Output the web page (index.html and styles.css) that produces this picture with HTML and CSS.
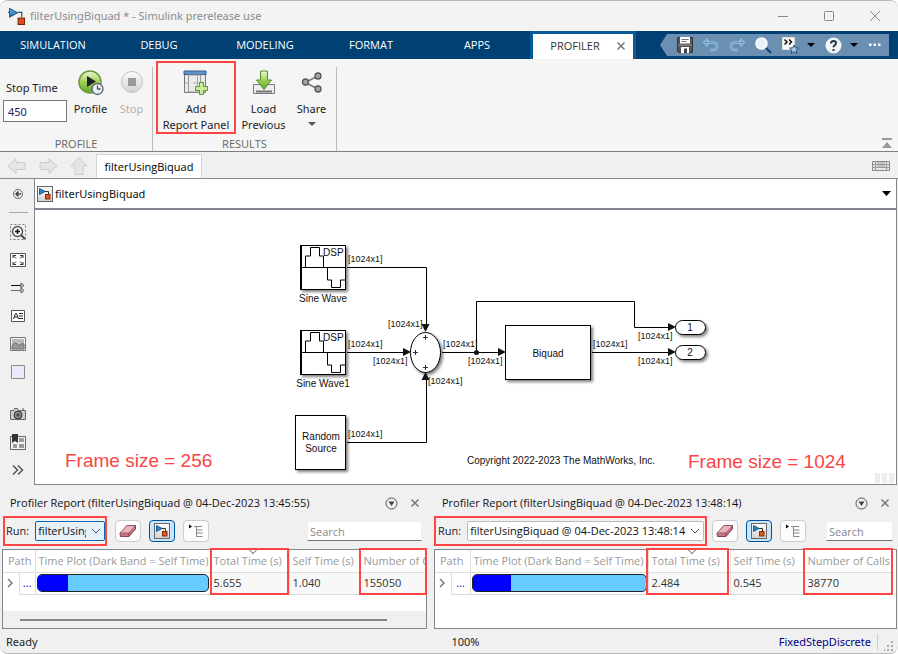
FILE: index.html
```html
<!DOCTYPE html>
<html lang="en">
<head>
<meta charset="utf-8">
<title>filterUsingBiquad * - Simulink prerelease use</title>
<link rel="stylesheet" href="styles.css">
</head>
<body>
<svg class="defs" aria-hidden="true">
  <defs>
    <linearGradient id="green" x1="0" y1="0" x2="0" y2="1"><stop offset="0" stop-color="#eef8d8"/><stop offset=".5" stop-color="#9fd058"/><stop offset="1" stop-color="#5fa52c"/></linearGradient>
    <linearGradient id="grey" x1="0" y1="0" x2="0" y2="1"><stop offset="0" stop-color="#fdfdfd"/><stop offset="1" stop-color="#d2d2d2"/></linearGradient>
    <linearGradient id="tri" x1="0" y1="0" x2="0" y2="1"><stop offset="0" stop-color="#6db8ea"/><stop offset="1" stop-color="#1f6cab"/></linearGradient>
    <symbol id="model" viewBox="0 0 16 16"><path d="M0 4h2M9 4h4v5" fill="none" stroke="#333"/><path d="M1.500.5v8L9 4.500z" fill="url(#tri)" stroke="#1d5d94"/><rect x="9.500" y="9.500" width="6" height="6" fill="#d9521e" stroke="#7c2608"/></symbol>
    <symbol id="modelbox" viewBox="0 0 16 16"><rect x=".5" y=".5" width="15" height="15" fill="url(#grey)" stroke="#666"/><path d="M2 5h1M8 5.500h3.500V9" fill="none" stroke="#333"/><path d="M2.500 2.500v6L8 5.500z" fill="#2f83c5" stroke="#1d5d94"/><rect x="8.500" y="8.500" width="4.500" height="4.500" fill="#e05520" stroke="#8b2d0b"/></symbol>
    <symbol id="eraser" viewBox="0 0 18 14"><path d="M1 9.500 8 1.500h8.500V5L10 12.500H1.500z" fill="#c97585" stroke="#8b4452"/><path d="M1 9 8 1.500h8.500L10 9z" fill="#e8b3bc" stroke="#8b4452" stroke-width=".7"/><path d="M10 9v3.500" stroke="#8b4452"/></symbol>
    <symbol id="outline" viewBox="0 0 16 14"><path d="M1 .5v4L4 2.500z" fill="#000"/><path d="M6 2.500h8M8.500 2.500v10M8.500 6h6M8.500 9h6M8.500 12.500h6" fill="none" stroke="#888"/></symbol>
    <symbol id="menu" viewBox="0 0 13 13"><circle cx="6.500" cy="6.500" r="5.500" fill="none" stroke="#555"/><path d="M3.500 4.500h6L6.500 9z" fill="#444"/></symbol>
    <symbol id="close" viewBox="0 0 10 10"><path d="m1.500 1.500 7 7m0-7-7 7" stroke="#777" stroke-width="1.500"/></symbol>
    <symbol id="chev" viewBox="0 0 10 6"><path d="m1 1 4 4 4-4" fill="none" stroke="#555"/></symbol>
  </defs>
</svg>
<div class="window">
  <header class="titlebar">
    <svg width="17" height="17"><use href="#model"/></svg>
    <h1>filterUsingBiquad * - Simulink prerelease use</h1>
    <div class="wincontrols">
      <button aria-label="Minimize"><svg width="12" height="12"><path d="M1 6.500h10" stroke="#888"/></svg></button>
      <button aria-label="Maximize"><svg width="12" height="12"><rect x="1.500" y="1.500" width="9" height="9" rx="1" fill="none" stroke="#888"/></svg></button>
      <button aria-label="Close"><svg width="12" height="12"><path d="m1 1 10 10M11 1 1 11" stroke="#888"/></svg></button>
    </div>
  </header>

  <nav class="tabs">
    <button>SIMULATION</button><button>DEBUG</button><button>MODELING</button><button>FORMAT</button><button>APPS</button>
    <div class="activetab"><button>PROFILER</button><button class="tabclose" aria-label="Close tab"><svg width="10" height="10"><use href="#close"/></svg></button></div>
    <div class="quick">
      <button aria-label="Save"><svg width="16" height="16" viewBox="0 0 16 16"><path d="M.5.5h15v15H1.500l-1-1z" fill="#555" stroke="#333"/><path d="M3 0h10v6.500H3z" fill="#fff"/><path d="M4.500 2.500h7M4.500 4.500h5" stroke="#777"/><path d="M1 8h14" stroke="#999"/><path d="M4 10h8v6H4z" fill="#fff"/><path d="M7 11.500h3V16H7z" fill="#444"/></svg></button>
      <button aria-label="Undo"><svg width="16" height="14" viewBox="0 0 16 14"><path d="M5 1 1.500 4.500 5 8M2 4.500h8q4 0 4 3.500t-4 4H7" fill="none" stroke="#9cc6e2" stroke-width="2.500"/><path d="M5 1 1.500 4.500 5 8M2 4.500h8q4 0 4 3.500t-4 4H7" fill="none" stroke="#6597bb"/></svg></button>
      <button aria-label="Redo"><svg width="16" height="14" viewBox="0 0 16 14"><path d="m11 1 3.500 3.500L11 8M14 4.500H6q-4 0-4 3.500t4 4h3" fill="none" stroke="#9cc6e2" stroke-width="2.500"/><path d="m11 1 3.500 3.500L11 8M14 4.500H6q-4 0-4 3.500t4 4h3" fill="none" stroke="#6597bb"/></svg></button>
      <button aria-label="Find"><svg width="17" height="17" viewBox="0 0 17 17"><path d="m10 10 6 6" stroke="#0c4472" stroke-width="2"/><circle cx="6.500" cy="6.500" r="5.500" fill="#e6f3fa" stroke="#fff" stroke-width="1.500"/></svg></button>
      <button class="split" aria-label="Favorites"><svg width="17" height="17" viewBox="0 0 17 17"><path d="M.5.5h12v12H.5z" fill="#fafafa" stroke="#ddd"/><path d="m2.500 2.500 2.500 2.500L2.500 7.500M7 2.500 9.500 5 7 7.500" fill="none" stroke="#111" stroke-width="1.500"/><path d="m12 8 1.300 2.800 3.200.3-2.400 2.100.7 3.300-2.800-1.700-2.800 1.700.7-3.300-2.400-2.100 3.200-.3z" fill="#a5cce8" stroke="#28557b"/></svg><svg width="8" height="5"><path d="M0 0h8L4 4z"/></svg></button>
      <button class="split" aria-label="Help"><svg width="17" height="17" viewBox="0 0 17 17"><circle cx="8.500" cy="8.500" r="7.500" fill="#f0f4f7" stroke="#fff"/><path d="M6 6.500q0-2.500 2.500-2.500T11 6.200q0 1.300-1.500 2.100-1 .6-1 2M8.500 12v2" fill="none" stroke="#263746" stroke-width="2"/></svg><svg width="8" height="5"><path d="M0 0h8L4 4z"/></svg></button>
      <button aria-label="More"><svg width="14" height="4"><path d="M1 .5h2.500V3H1zM5.500.5H8V3H5.500zM10 .5h2.500V3H10z" fill="#fff"/></svg></button>
    </div>
  </nav>

  <section class="ribbon">
    <div class="group">
      <div class="items">
        <div class="stoptime"><label for="stop">Stop Time</label><input id="stop" value="450"></div>
        <button class="tool"><svg width="26" height="26" viewBox="0 0 26 26"><circle cx="12" cy="12" r="11" fill="url(#green)" stroke="#69993b" stroke-width="1.500"/><path d="M9 6v11l9-5.500z" fill="#222"/><circle cx="19.500" cy="19" r="5.500" fill="#e9eef3" stroke="#59636d" stroke-width="1.300"/><path d="M19.500 15.500V19h3" fill="none" stroke="#46586a" stroke-width="1.300"/></svg>Profile</button>
        <button class="tool off"><svg width="26" height="26" viewBox="0 0 26 26"><circle cx="13" cy="12" r="10.500" fill="url(#grey)" stroke="#c3c3c3"/><path d="M9 8h8v8H9z" fill="#9a9a9a"/></svg>Stop</button>
      </div>
      <h2>PROFILE</h2>
    </div>
    <div class="group results">
      <div class="items">
        <button class="tool wide marked"><svg width="26" height="26" viewBox="0 0 26 26"><path d="M1.500 1.500h21v21h-21z" fill="#eaeaea" stroke="#777"/><path d="M1 1h22v3.500H1z" fill="#5e94cf" stroke="#375f91"/><path d="M5.500 5v17M10 13h8M2 13h3M14.500 5v14" stroke="#aaa" fill="none"/><path d="M5.500 5h12v17h-12z" fill="none" stroke="#999"/><path d="M16.500 12.500h4v4h4v4h-4v4h-4v-4h-4v-4h4z" fill="#cdea9a" stroke="#5d9634"/></svg>Add<br>Report Panel</button>
        <button class="tool"><svg width="26" height="26" viewBox="0 0 26 26"><path d="M2.500 14.500h21v9h-21z" fill="#eee" stroke="#777"/><path d="M5 21.500h16" stroke="#777" stroke-width="2"/><path d="M9.500 1h7v9h4L13 19.500 5.500 10h4z" fill="url(#green)" stroke="#568c2c"/></svg>Load<br>Previous</button>
        <button class="tool"><svg width="26" height="26" viewBox="0 0 26 26"><path d="M19 6 6 12.500 19 19" fill="none" stroke="#777" stroke-width="1.500"/><g fill="#a3a3a3" stroke="#555" stroke-width="1.300"><circle cx="19" cy="6" r="3"/><circle cx="6.500" cy="12" r="3"/><circle cx="19" cy="19" r="3"/></g></svg>Share<svg class="caret" width="8" height="4"><path d="M0 0h8L4 4z" fill="#555"/></svg></button>
      </div>
      <h2>RESULTS</h2>
    </div>
    <button class="collapse" aria-label="Collapse"><svg width="12" height="11"><path d="M1 0h10v2H1zM6 4l5 6H1z" fill="#999"/></svg></button>
  </section>

  <div class="docbar">
    <button aria-label="Back"><svg width="20" height="18"><path d="M1 9 9 1.500v4h9v7H9v4z" fill="#e5e5e5" stroke="#ccc"/></svg></button>
    <button aria-label="Forward"><svg width="20" height="18"><path d="m19 9-8-7.500v4H2v7h9v4z" fill="#e5e5e5" stroke="#ccc"/></svg></button>
    <button aria-label="Up"><svg width="20" height="18"><path d="m10 .5 8 8.500h-4v8.500H6V9H2z" fill="#e5e5e5" stroke="#ccc"/></svg></button>
    <button class="doctab">filterUsingBiquad</button>
    <button class="keyboard" aria-label="Keyboard"><svg width="18" height="10"><path d="M.5.5h17v9H.5z" fill="#e8e8e8" stroke="#888"/><path d="M0 3.500h18M0 6.500h18M3.500 0v10M6 1v6M8 1v6M10 1v6M12 1v6M14.500 0v10" fill="none" stroke="#999"/></svg></button>
  </div>

  <main class="editor">
    <aside class="palette">
      <button aria-label="Hide browser"><svg width="16" height="16"><circle cx="8" cy="8" r="4.500" fill="none" stroke="#666"/><path d="M8.500 5.500 6 8l2.500 2.500M6 8h5" fill="none" stroke="#444" stroke-width="1.500"/></svg></button>
      <hr>
      <button aria-label="Zoom"><svg width="16" height="16"><path d="M.5.5h15v15H.5z" fill="none" stroke="#777" stroke-dasharray="2 2"/><path d="m11 11 4 4" stroke="#444" stroke-width="2"/><circle cx="7.500" cy="7.500" r="5" fill="#f5f5f5" stroke="#555" stroke-width="1.500"/><path d="M5 7.500h5M7.500 5v5" stroke="#111" stroke-width="1.500"/></svg></button>
      <button aria-label="Fit to view"><svg width="16" height="16"><path d="M.5 1.500h15v13H.5z" fill="#fff" stroke="#555"/><path d="M3 6V3.500h3M10 3.500h3V6M3 10v2.500h3M13 10v2.500h-3M3 3.500l3 3M13 3.500l-3 3M3 12.500l3-3M13 12.500l-3-3" fill="none" stroke="#333"/></svg></button>
      <button aria-label="Signals"><svg width="16" height="16"><path d="M1 5.500h12" stroke="#111"/><path d="M1 10.500h12" stroke="#666"/><path d="m11 3 3 2.500L11 8zM11 8l3 2.500-3 2.500z" fill="#eee" stroke="#555"/></svg></button>
      <button aria-label="Annotation"><svg width="16" height="16"><path d="M1.500 2.500h13v11h-13z" fill="#fff" stroke="#555"/><path d="m3.500 11 2-5.500h1l2 5.500M4.500 9h3M9 5.500h4M9 8h4M9 10.500h4" fill="none" stroke="#222"/></svg></button>
      <button aria-label="Image"><svg width="16" height="16"><path d="M.5 1.500h15v13H.5z" fill="#f4f4f4" stroke="#777"/><path d="M2 3h12v10H2z" fill="#bbb"/><path d="M2 10q3-5 5-2t3 1 4-1v5H2z" fill="#999" stroke="#666"/></svg></button>
      <button aria-label="Area"><svg width="16" height="16"><path d="M1.500 1.500h13v13h-13z" fill="#e9e9fb" stroke="#888"/></svg></button>
      <button class="apart" aria-label="Screenshot"><svg width="16" height="16"><path d="M.5 4.500h3l1-2h3l1 2h7v9H.5z" fill="#ccc" stroke="#666"/><circle cx="8" cy="9" r="4" fill="#888" stroke="#333"/><circle cx="8" cy="9" r="1.500" fill="#444"/><path d="M12 3h2" stroke="#555"/></svg></button>
      <button aria-label="Bookmarks"><svg width="16" height="16"><path d="M.5 2.500h15v13H.5z" fill="#f4f4f4" stroke="#666"/><path d="M9 4h5v4H9zM9 10h5v4H9zM3 10h4v4H3z" fill="#999"/><path d="M2 0h6v9L5 7 2 9z" fill="#333"/></svg></button>
      <button aria-label="More tools"><svg width="16" height="16"><path d="m3 3.500 4.500 4.500L3 12.500M8 3.500l4.500 4.500L8 12.500" fill="none" stroke="#555" stroke-width="1.500"/></svg></button>
    </aside>
    <div class="stage">
      <div class="crumb"><svg width="16" height="16"><use href="#modelbox"/></svg><span>filterUsingBiquad</span><button aria-label="History"><svg width="9" height="5"><path d="M0 0h9L4.500 5z"/></svg></button></div>
      <div class="canvas">
        <svg class="diagram" viewBox="35 210 861 274" role="img" aria-label="Block diagram">
          <defs>
            <filter id="sh" x="-20%" y="-20%" width="150%" height="150%"><feDropShadow dx="2" dy="2" stdDeviation="1.500" flood-opacity=".5"/></filter>
            <g id="sine"><rect x=".5" y=".5" width="45" height="44" fill="#fff" stroke="#000" filter="url(#sh)"/><path d="M1.500 0v45M0 22.500h46M5.500 22V11h5V2.500h9V11h4v11.500M27.500 22.500V35h4v7.500h9V35h5" fill="none" stroke="#000"/><text x="23" y="11">DSP</text></g>
            <path id="ar" d="M0-4v8L8 0z"/>
          </defs>
          <use href="#sine" x="300" y="245"/><use href="#sine" x="300" y="330"/>
          <g filter="url(#sh)" fill="#fff" stroke="#000"><rect x="295.500" y="415.500" width="50" height="54"/><rect x="505.500" y="325.500" width="85" height="54"/><ellipse cx="425.500" cy="352.500" rx="15" ry="20"/><rect x="675.500" y="320.500" width="30" height="14" rx="7"/><rect x="675.500" y="345.500" width="30" height="14" rx="7"/></g>
          <path d="M347 267.500h79.500V326M347 352.500h58M347 442.500h79.500V379M442 352.500h57M476.500 352.500v-51h158v26H670M592 352.500h78" fill="none" stroke="#000"/>
          <circle cx="476.500" cy="352.500" r="2.500"/>
          <use href="#ar" x="403" y="352"/><use href="#ar" x="498" y="352"/><use href="#ar" x="668" y="327"/><use href="#ar" x="668" y="352"/>
          <path d="M421.500 324h8l-4 8zM421.500 380h8l-4-8z"/>
          <g class="dims"><text x="348" y="262">[1024x1]</text><text x="348" y="347">[1024x1]</text><text x="348" y="437">[1024x1]</text><text x="388" y="327">[1024x1]</text><text x="373" y="364">[1024x1]</text><text x="428" y="384">[1024x1]</text><text x="443" y="347">[1024x1]</text><text x="468" y="364">[1024x1]</text><text x="593" y="347">[1024x1]</text><text x="638" y="339">[1024x1]</text><text x="638" y="364">[1024x1]</text></g>
          <path d="M423 337.500h5M425.500 335v5M413 352.500h5M415.500 350v5M423 367.500h5M425.500 365v5" stroke="#333"/>
          <g class="mid"><text x="323" y="302">Sine Wave</text><text x="323" y="387">Sine Wave1</text><text x="321" y="440">Random</text><text x="321" y="452">Source</text><text x="548" y="357">Biquad</text><text x="690" y="331">1</text><text x="690" y="356">2</text><text x="561" y="464">Copyright 2022-2023 The MathWorks, Inc.</text></g>
          <g class="note"><text x="65" y="467">Frame size = 256</text><text x="688" y="468">Frame size = 1024</text></g>
          <path d="M875 473h5v10h-5zM882 473h5v10h-5zM889 473h5v10h-5z" fill="#eee"/>
        </svg>
      </div>
    </div>
  </main>

  <section class="docks">
    <article class="dock">
      <header><h3>Profiler Report (filterUsingBiquad @ 04-Dec-2023 13:45:55)</h3><button aria-label="Panel menu"><svg width="13" height="13"><use href="#menu"/></svg></button><button aria-label="Close panel"><svg width="10" height="10"><use href="#close"/></svg></button></header>
      <div class="bar">
        <div class="run"><label for="run1">Run:</label><span class="pick focus"><select id="run1"><option>filterUsingBiquad @ 04-Dec-2023 13:45:55</option></select><svg width="10" height="6"><use href="#chev"/></svg></span></div>
        <button class="sq" aria-label="Clear"><svg width="18" height="14"><use href="#eraser"/></svg></button>
        <button class="sq on" aria-label="Highlight"><svg width="16" height="16"><use href="#modelbox"/></svg></button>
        <button class="sq" aria-label="Expand"><svg width="16" height="14"><use href="#outline"/></svg></button>
        <input class="search" type="search" placeholder="Search" aria-label="Search">
      </div>
      <div class="report">
        <div class="scroller">
          <table>
            <colgroup><col class="c-exp"><col class="c-dots"><col class="c-plot"><col class="c-total"><col class="c-self"><col class="c-calls"></colgroup>
            <thead><tr><th colspan="2">Path</th><th>Time Plot (Dark Band = Self Time)</th><th class="sorted">Total Time (s)</th><th>Self Time (s)</th><th class="clip">Number of Calls</th></tr></thead>
            <tbody><tr><td class="exp"><svg width="6" height="10"><path d="m1 1 4 4-4 4" fill="none" stroke="#777" stroke-width="1.500"/></svg></td><td class="dots"><a href="#">...</a></td><td class="plot"><div class="band"><i style="width:18%"></i></div></td><td class="num">5.655</td><td class="num">1.040</td><td class="num">155050</td></tr></tbody>
          </table>
          <div class="track"><div></div></div>
        </div>
        <span class="mark m1"></span><span class="mark m2"></span>
      </div>
    </article>
    <article class="dock second">
      <header><h3>Profiler Report (filterUsingBiquad @ 04-Dec-2023 13:48:14)</h3><button aria-label="Panel menu"><svg width="13" height="13"><use href="#menu"/></svg></button><button aria-label="Close panel"><svg width="10" height="10"><use href="#close"/></svg></button></header>
      <div class="bar">
        <div class="run"><label for="run2">Run:</label><span class="pick"><select id="run2"><option>filterUsingBiquad @ 04-Dec-2023 13:48:14</option></select><svg width="10" height="6"><use href="#chev"/></svg></span></div>
        <button class="sq" aria-label="Clear"><svg width="18" height="14"><use href="#eraser"/></svg></button>
        <button class="sq on" aria-label="Highlight"><svg width="16" height="16"><use href="#modelbox"/></svg></button>
        <button class="sq" aria-label="Expand"><svg width="16" height="14"><use href="#outline"/></svg></button>
        <input class="search" type="search" placeholder="Search" aria-label="Search">
      </div>
      <div class="report">
        <div class="scroller">
          <table>
            <colgroup><col class="c-exp"><col class="c-dots"><col class="c-plot"><col class="c-total"><col class="c-self"><col class="c-calls"></colgroup>
            <thead><tr><th colspan="2">Path</th><th>Time Plot (Dark Band = Self Time)</th><th class="sorted">Total Time (s)</th><th>Self Time (s)</th><th>Number of Calls</th></tr></thead>
            <tbody><tr><td class="exp"><svg width="6" height="10"><path d="m1 1 4 4-4 4" fill="none" stroke="#777" stroke-width="1.500"/></svg></td><td class="dots"><a href="#">...</a></td><td class="plot"><div class="band"><i style="width:22%"></i></div></td><td class="num">2.484</td><td class="num">0.545</td><td class="num">38770</td></tr></tbody>
          </table>
        </div>
        <span class="mark m1"></span><span class="mark m2"></span>
      </div>
    </article>
  </section>

  <footer class="status"><span>Ready</span><span>100%</span><span class="solver"><a href="#">FixedStepDiscrete</a><svg width="10" height="10"><path d="M7 0h2v2H7zM7 4h2v2H7zM3 4h2v2H3zM7 8h2v2H7zM3 8h2v2H3zM0 8h1v2H0z" fill="#aaa"/></svg></span></footer>
</div>
</body>
</html>
```
FILE: styles.css
```css
* { box-sizing: border-box; }
body { margin: 0; background: #fff; font: 11px/16px "Noto Sans", "Open Sans", sans-serif; color: #1c1c1c; }
button { border: 0; padding: 0; background: none; font: inherit; color: inherit; display: flex; align-items: center; justify-content: center; }
h1, h2, h3 { margin: 0; font: inherit; }
svg { display: block; flex: none; }
input, select { font: inherit; color: inherit; min-width: 0; }
a { text-decoration: none; color: #0000e0; }
.defs { position: absolute; width: 0; height: 0; }
.window { min-height: 100vh; display: flex; flex-direction: column; background: #f0f0f0; border-top: 1px solid #bbb; border-bottom: 1px solid #bbb; border-radius: 8px; overflow: hidden; }

.titlebar { height: 30px; flex: none; display: flex; align-items: center; gap: 5px; padding-left: 8px; background: #f3f3f3; color: #8c8c8c; }
.titlebar h1 { flex: 1; }
.wincontrols { display: flex; }
.wincontrols button { width: 46px; height: 30px; }

.tabs { height: 28px; flex: none; display: flex; background: #004073; color: #fff; padding-right: 9px; font-family: "Open Sans", "Noto Sans", sans-serif; }
.tabs > button { width: 106px; }
.activetab { width: 106px; display: flex; padding-bottom: 2px; background: #fff; color: #333; border: 3px solid #075b99; border-bottom: 0; }
.activetab button:first-child { flex: 1; padding-left: 8px; }
.tabclose { width: 24px; }
.quick { width: 229px; height: 22px; margin: 3px 0 0 auto; padding: 0 7px 0 17px; display: flex; align-items: center; justify-content: space-between; background: #6a8fb0; clip-path: polygon(0 50%, 7px 0, 100% 0, 100% 100%, 7px 100%); }
.quick .split { gap: 8px; }

.ribbon { flex: none; height: 93px; display: flex; background: #f5f5f5; border-bottom: 1px solid #808080; padding-top: 2px; }
.group { width: 153px; display: flex; flex-direction: column; position: relative; border-right: 1px solid transparent; }
.group::after { content: ""; position: absolute; right: -1px; top: 6px; bottom: 0; width: 1px; background: #bbb; }
.group.results { width: 184px; }
.group h2 { text-align: center; font-family: "Open Sans", "Noto Sans", sans-serif; line-height: 14px; color: #666; }
.items { flex: 1; display: flex; }
.stoptime { width: 70px; padding: 19px 0 0 3px; }
.stoptime label { display: block; padding-left: 3px; }
.stoptime input { display: block; width: 64px; height: 22px; margin-top: 4px; padding: 0 4px; border: 1px solid #777; background: #fff; color: #2a1a5e; }
.tool { position: relative; min-width: 41px; flex-direction: column; justify-content: flex-start; padding-top: 9px; }
.results .items { justify-content: space-between; padding: 0 4px 0 3px; }
.tool svg { margin-bottom: 5px; }
.tool .caret { margin: 5px 0 0; }
.wide { width: 80px; }
.off { color: #b0b0b0; }
.marked::after { content: ""; position: absolute; inset: 0 0 3px; border: 2px solid #f44; }
.collapse { margin: auto 5px 2px auto; }

.docbar { flex: none; height: 27px; display: flex; align-items: center; gap: 11px; padding: 2px 8px 0 7px; border-bottom: 1px solid #8a8c93; }
.doctab { align-self: stretch; margin-left: -4px; width: 106px; background: #fff; border: 1px solid #d5d5d5; border-bottom: 0; color: #000; font-family: "Open Sans", "Noto Sans", sans-serif; }
.keyboard { margin-left: auto; }

.editor { flex: 1; display: flex; padding-right: 1px; }
.palette { width: 34px; padding: 1px 1px 0 3px; display: flex; flex-direction: column; align-items: center; }
.palette button { width: 28px; height: 28px; }
.palette hr { width: 19px; margin: 4px 0 5px; border: 0; border-top: 1px solid #aaa; }
.palette .apart { margin-top: 14px; }
.stage { flex: 1; display: flex; flex-direction: column; border: 1px solid #808590; border-top: 0; }
.crumb { height: 31px; display: flex; align-items: center; gap: 2px; padding: 0 5px 0 2px; background: #fff; border-bottom: 2px solid #808590; color: #111; }
.crumb button { margin-left: auto; }
.canvas { flex: 1; background: #fff; }
.diagram { width: 100%; height: auto; font: 10px "Liberation Sans", sans-serif; fill: #111; }
.dims { font-size: 9px; }
.mid { text-anchor: middle; }
.note { font-size: 19px; fill: #f94545; }

.docks { flex: none; display: grid; grid-template-columns: 427fr 465fr; gap: 6px; font-family: "Open Sans", "Noto Sans", sans-serif; }
.dock { min-width: 0; display: flex; flex-direction: column; padding-left: 2px; }
.dock.second { padding: 0 1px 0 1px; }
.dock header { height: 32px; padding: 4px 7px 0 8px; display: flex; align-items: center; gap: 12px; color: #111; }
.dock h3 { flex: 1; white-space: nowrap; }
.bar { height: 32px; display: flex; align-items: center; gap: 8px; padding: 0 5px 4px 1px; }
.second .bar { padding: 0 4px 4px 0; }
.run { display: flex; align-items: center; height: 30px; flex: none; width: 104px; gap: 6px; border: 2px solid #f44; padding: 0 0 0 1px; }
.second .run { width: 273px; padding: 0 1px 0 2px; margin-right: -3px; }
.pick { flex: 1; min-width: 0; position: relative; display: flex; align-items: center; }
.pick select { appearance: none; width: 100%; height: 20px; padding: 0 14px 0 2px; border: 1px solid #bbb; border-radius: 2px; background: #fff; color: #111; }
.pick.focus select { padding-right: 18px; border-color: #0067b8; background: #e5f1fb; }
.pick svg { position: absolute; right: 4px; }
.sq { width: 26px; height: 22px; flex: none; border: 1px solid #ccc; border-radius: 4px; background: #fdfdfd; }
.sq.on { border-color: #00529b; background: #cce4f7; }
.search { width: 115px; height: 20px; margin-left: auto; padding: 0 2px; border: 1px solid #eee; border-bottom-color: #777; background: #fff; }
.second .search { width: 67px; }
.search::placeholder { color: #888; }
.report { position: relative; }
.scroller { height: 80px; overflow: hidden; display: flex; flex-direction: column; background: #fff; border: 1px solid #808590; }
table { width: 100%; flex: none; table-layout: fixed; border-collapse: collapse; }
.second table { width: 458px; }
th { height: 22px; padding: 0 0 0 3px; font-weight: 400; color: #999; text-align: left; white-space: nowrap; border-right: 1px solid #ddd; border-bottom: 1px solid #ddd; position: relative; }
td { height: 22px; padding: 0 3px; border-right: 1px solid #ddd; border-bottom: 1px solid #ddd; color: #333; }
th:first-child { padding-left: 5px; }
.clip { overflow: hidden; }
.c-exp { width: 16px; } .c-dots { width: 16px; } .c-plot { width: 175px; } .c-total { width: 79px; } .c-self { width: 71px; }
.second .c-dots { width: 19px; } .second .c-plot { width: 178px; } .second .c-total { width: 82px; } .second .c-self { width: 74px; }
.exp { border-bottom: 0; padding: 0 4px; }
.dots { text-align: center; }
.num { background: #f8f8f8; }
.sorted::before { content: ""; position: absolute; left: 50%; top: -3px; width: 5px; height: 5px; border: solid #888; border-width: 0 1px 1px 0; transform: rotate(45deg); }
.plot { padding: 0 1px; }
.band { height: 18px; display: flex; overflow: hidden; border: 1px solid #222; border-radius: 5px; background: #66ccff; }
.band i { background: #00f; }
.track { height: 17px; margin-top: auto; padding: 8px 39px 0 17px; background: #f0f0f0; }
.track div { height: 2px; background: #858585; }
.mark { position: absolute; top: -1px; height: 47px; border: 2px solid #f44; }
.m1 { left: 208px; width: 79px; } .m2 { left: 357px; right: 0; }
.second .m1 { left: 212px; width: 83px; } .second .m2 { left: 369px; width: 90px; right: auto; }

.status { flex: none; height: 24px; display: grid; grid-template-columns: 1fr auto 1fr; align-items: center; padding: 2px 4px 0 6px; }
.status > span:nth-child(2) { padding-left: 31px; }
.solver { display: flex; justify-content: flex-end; align-items: center; gap: 6px; }
.solver a { padding-right: 6px; border-right: 1px solid #ccc; color: #00007f; }
.solver svg { margin-top: 8px; }
```
